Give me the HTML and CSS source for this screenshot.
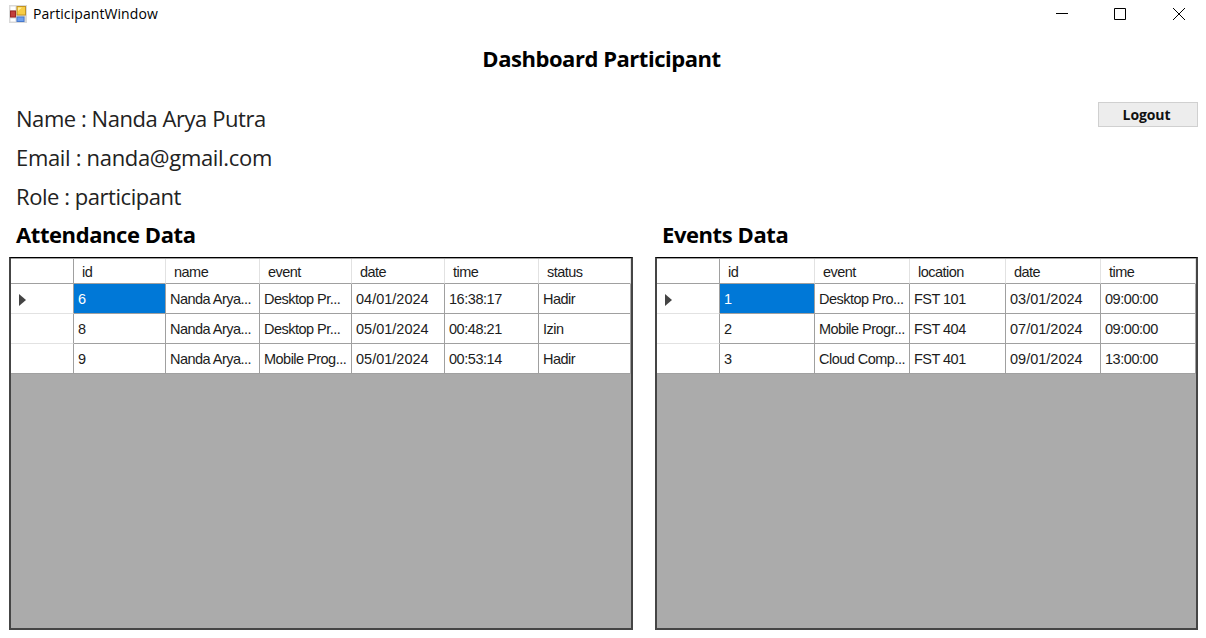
FILE: index.html
```html
<!DOCTYPE html>
<html lang="en">
<head>
<meta charset="utf-8">
<title>ParticipantWindow</title>
<link rel="stylesheet" href="styles.css">
</head>
<body>
<div class="window">
  <header class="titlebar">
    <svg class="app-icon" width="18" height="18" viewBox="0 0 18 18">
      <rect width="18" height="18" fill="#d9d9d9"/>
      <path d="M1.5 1.5h5v3.500h-5zM1.500 13.500h5v3h-5z" fill="#fff"/>
      <rect x="1.500" y="6" width="5" height="6" fill="#c33f3b" stroke="#9c2523"/>
      <rect x="8" y="1.500" width="8.500" height="8.500" fill="#f8cd45" stroke="#c29322"/>
      <path d="M9 2.500h4L9 6z" fill="#fff0a0"/>
      <rect x="8" y="12" width="7" height="4.500" fill="#6ea0ee" stroke="#4678cc"/>
    </svg>
    <span class="caption">ParticipantWindow</span>
    <svg class="controls" width="130" height="14" viewBox="0 0 130 14" fill="none" stroke="#000">
      <path d="M0 6.500h12M58.500 1.500h11v11h-11zM117 1l12 12M129 1l-12 12"/>
    </svg>
  </header>
  <h1 class="title">Dashboard Participant</h1>
  <section class="profile">
    <div class="details">
      <p class="name">Name : Nanda Arya Putra</p>
      <p class="email">Email : nanda@gmail.com</p>
      <p class="role">Role : participant</p>
    </div>
    <button class="logout">Logout</button>
  </section>
  <main class="panels">
    <section>
      <h2 class="attendance-title">Attendance Data</h2>
      <div class="frame"><div class="grid attendance">
        <div class="head corner"></div><div class="head">id</div><div class="head">name</div><div class="head">event</div><div class="head">date</div><div class="head">time</div><div class="head">status</div>
        <div class="row-head"><i class="marker"></i></div><div class="selected">6</div><div>Nanda Arya...</div><div>Desktop Pr...</div><div class="num">04/01/2024</div><div class="time">16:38:17</div><div>Hadir</div>
        <div class="row-head"></div><div>8</div><div>Nanda Arya...</div><div>Desktop Pr...</div><div class="num">05/01/2024</div><div class="time">00:48:21</div><div>Izin</div>
        <div class="row-head"></div><div>9</div><div>Nanda Arya...</div><div>Mobile Prog...</div><div class="num">05/01/2024</div><div class="time">00:53:14</div><div>Hadir</div>
      </div></div>
    </section>
    <section>
      <h2 class="events-title">Events Data</h2>
      <div class="frame"><div class="grid events">
        <div class="head corner"></div><div class="head">id</div><div class="head">event</div><div class="head">location</div><div class="head">date</div><div class="head">time</div>
        <div class="row-head"><i class="marker"></i></div><div class="selected">1</div><div>Desktop Pro...</div><div>FST 101</div><div class="num">03/01/2024</div><div class="time">09:00:00</div>
        <div class="row-head"></div><div>2</div><div>Mobile Progr...</div><div>FST 404</div><div class="num">07/01/2024</div><div class="time">09:00:00</div>
        <div class="row-head"></div><div>3</div><div>Cloud Comp...</div><div>FST 401</div><div class="num">09/01/2024</div><div class="time">13:00:00</div>
      </div></div>
    </section>
  </main>
</div>
</body>
</html>
```
FILE: styles.css
```css
* { box-sizing: border-box; }
body { margin: 0; background: #fff; color: #000; font-family: "Open Sans", "Noto Sans", sans-serif; }
h1, h2, p { margin: 0; white-space: nowrap; }
.window { width: 1206px; height: 638px; overflow: hidden; display: flex; flex-direction: column; }
.titlebar { height: 28px; padding: 0 20px 0 9px; display: flex; align-items: center; }
.app-icon { margin-top: -1px; }
.caption { margin: -2px 0 0 6px; font-size: 14px; letter-spacing: 0.08px; }
.controls { margin-left: auto; }
.title { height: 62px; line-height: 60px; padding-right: 3px; text-align: center; font-size: 22px; font-weight: 700; letter-spacing: -0.46px; }
.profile { height: 126px; padding: 9px 8px 0 16px; display: flex; justify-content: space-between; align-items: flex-start; }
.details p { height: 39px; line-height: 39px; font-size: 22px; letter-spacing: -0.45px; color: #222; }
.details .email { letter-spacing: -0.32px; }
.logout { margin-top: 3px; width: 100px; height: 25px; padding: 1px 3px 0 0; border: 1px solid #d0d0d0; background: #ededed; color: #111; font: 700 14px/20px "Open Sans", sans-serif; letter-spacing: -0.1px; }
.panels { display: grid; grid-template-columns: 624px 543px; gap: 22px; padding-left: 9px; }
h2 { height: 41px; line-height: 36px; padding-left: 7px; font-size: 22px; font-weight: 700; letter-spacing: -0.42px; }
.frame { height: 373px; border: 1px solid #1b1b1b; border-left: 2px solid #454545; border-right: 2px solid #454545; border-bottom: 2px solid #454545; border-top-color: #000; background: #ababab; }
.grid { display: grid; grid-template-rows: 25px 30px 30px 30px; border-top: 1px solid #a0a0a0; font: 14.5px/31px "Liberation Sans", Arial, sans-serif; letter-spacing: -0.52px; color: #1c1c1c; }
.attendance { grid-template-columns: 63px 92px 94px 92px 93px 94px 92px; }
.events { grid-template-columns: 63px 95px 95px 96px 95px 95px; }
.grid > div { padding-left: 4px; background: #fff; border-right: 1px solid #a0a0a0; border-bottom: 1px solid #a0a0a0; white-space: nowrap; overflow: hidden; }
.grid > .head { padding-left: 8px; line-height: 27px; border-right-color: #e2e2e2; }
.grid > .corner { border-right-color: #a0a0a0; }
.grid > .row-head { padding: 10px 0 0 8px; border-bottom-color: #e2e2e2; }
.attendance > .row-head:nth-last-child(7), .events > .row-head:nth-last-child(6) { border-bottom-color: #a0a0a0; }
.grid > .selected { background: #0078d7; color: #fff; }
.grid > .num { letter-spacing: 0; }
.grid > .time { letter-spacing: -0.45px; }
.marker { display: block; width: 0; height: 0; border: 6px solid transparent; border-left: 7px solid #444; border-right: 0; }
```
